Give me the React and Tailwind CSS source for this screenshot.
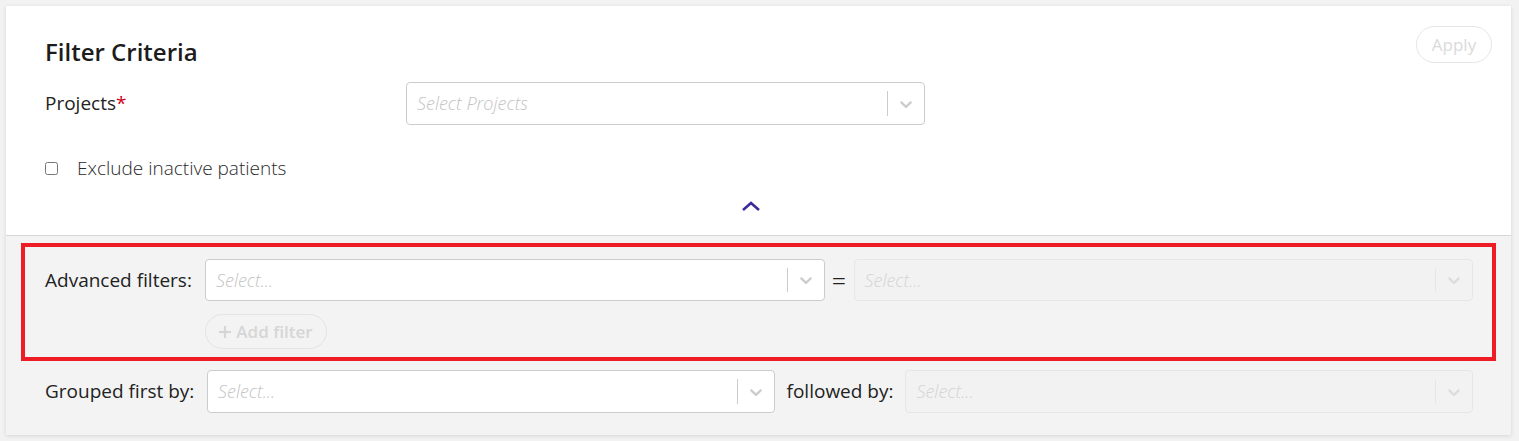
import { useState } from "react";

function Chevron() {
    return (
        <svg viewBox="0 0 20 20" width="20" height="20" className="fill-current">
            <path d="M4.516 7.548c0.436-0.446 1.043-0.481 1.576 0l3.908 3.747 3.908-3.747c0.533-0.481 1.141-0.446 1.574 0 0.436 0.445 0.408 1.197 0 1.615-0.406 0.418-4.695 4.502-4.695 4.502-0.217 0.223-0.502 0.335-0.787 0.335s-0.57-0.112-0.789-0.335c0 0-4.287-4.084-4.695-4.502s-0.436-1.17 0-1.615z" />
        </svg>
    );
}

function Select({ placeholder = "Select...", disabled = false, className = "" }) {
    return (
        <div
            className={
                "flex items-center rounded-[4px] border min-w-0 " +
                (disabled ? "bg-[#f2f2f2] border-[#e6e6e6] " : "bg-white border-[#cccccc] ") +
                className
            }
        >
            <div
                className={
                    "flex-1 px-[10px] italic font-light text-[18px] truncate " +
                    (disabled ? "text-[#d4d4d4]" : "text-[#c4c4c4]")
                }
            >
                {placeholder}
            </div>
            <div className="flex items-center self-stretch py-2">
                <span className={"w-px self-stretch " + (disabled ? "bg-[#e6e6e6]" : "bg-[#cccccc]")} />
                <span className={"px-2 " + (disabled ? "text-[#dcdcdc]" : "text-[#cccccc]")}>
                    <Chevron />
                </span>
            </div>
        </div>
    );
}

export default function App() {
    const [exclude, setExclude] = useState(false);

    return (
        <div className="min-h-[441px] bg-[#f2f2f2] p-[6px] pb-0 text-[#222222]" style={{ fontFamily: '"Open Sans", "Liberation Sans", sans-serif' }}>
            <div className="bg-[#f3f3f3] shadow-[0_1px_4px_rgba(0,0,0,0.12)] mr-[2px]">
                <div className="bg-white border-b border-[#d6d6d6] pl-[39px] pr-[19px] pt-[20px] h-[230px]">
                    <div className="flex justify-between items-start">
                        <h2 className="mt-[12px] text-[24px] leading-[28px] font-semibold text-[#1c1c1c]">Filter Criteria</h2>
                        <button className="h-[37px] w-[76px] rounded-full border border-[#e6e6e6] text-[17px] text-[#dadada] bg-white">
                            Apply
                        </button>
                    </div>
                    <div className="flex items-center mt-[16px]">
                        <label className="w-[361px] text-[19px]">
                            Projects<span className="text-[#d0021b]">*</span>
                        </label>
                        <Select placeholder="Select Projects" className="w-[519px] h-[43px]" />
                    </div>
                    <label className="flex items-center mt-[29px] gap-[19px] cursor-pointer">
                        <input
                            type="checkbox"
                            checked={exclude}
                            onChange={(e) => setExclude(e.target.checked)}
                            className="w-[13px] h-[13px] m-0"
                        />
                        <span className="text-[19px] font-light text-[#2a2a2a]">Exclude inactive patients</span>
                    </label>
                    <div className="flex justify-center mt-[17px] pr-[36px]">
                        <svg width="20" height="12" viewBox="0 0 20 12" fill="none" stroke="#3b2c9e" strokeWidth="2.6">
                            <polyline points="2,10 10,3 18,10" />
                        </svg>
                    </div>
                </div>

                <div className="pt-[7px] pb-[22px] px-[15px]">
                    <div className="border-4 border-[#ee1c25] pl-[20px] pr-[19px] pt-[12px] pb-[8px]">
                        <div className="flex items-center">
                            <label className="w-[160px] shrink-0 text-[19px]">Advanced filters:</label>
                            <Select className="flex-1 h-[42px]" />
                            <span className="w-[29px] text-center text-[25px] leading-none font-light">=</span>
                            <Select disabled className="flex-1 h-[42px]" />
                        </div>
                        <button className="ml-[160px] mt-[13px] h-[35px] w-[122px] rounded-full border border-[#e3e3e3] text-[17px] font-semibold text-[#d6d6d6] flex items-center justify-center gap-[5px]">
                            <svg width="12" height="12" viewBox="0 0 12 12" stroke="currentColor" strokeWidth="2.2">
                                <line x1="6" y1="0" x2="6" y2="12" />
                                <line x1="0" y1="6" x2="12" y2="6" />
                            </svg>
                            Add filter
                        </button>
                    </div>

                    <div className="flex items-center mt-[9px] pl-[24px] pr-[23px]">
                        <label className="w-[162px] shrink-0 text-[19px]">Grouped first by:</label>
                        <Select className="flex-1 h-[43px]" />
                        <label className="px-3 text-[19px]">followed by:</label>
                        <Select disabled className="flex-1 h-[43px]" />
                    </div>
                </div>
            </div>
        </div>
    );
}
